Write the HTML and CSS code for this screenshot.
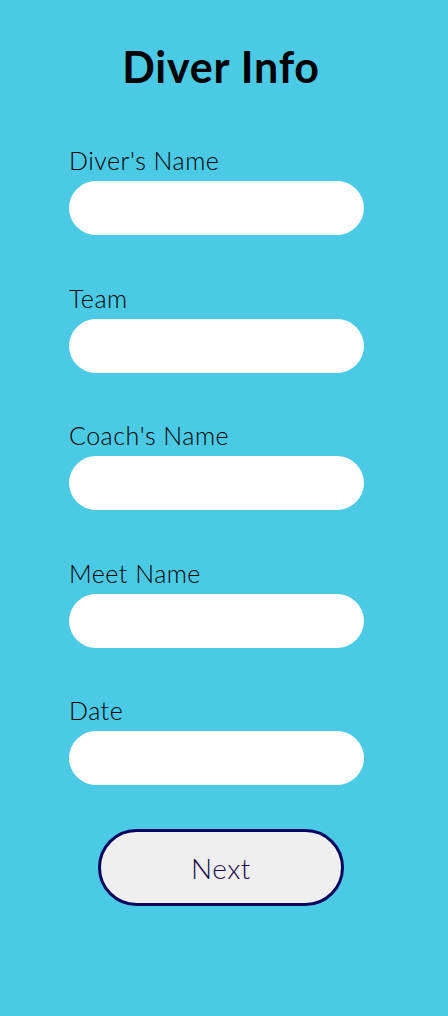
FILE: index.html
```html
<!DOCTYPE html>
<html lang="en">
<head>
<meta charset="utf-8">
<title>Diver Info</title>
<link rel="stylesheet" href="styles.css">
</head>
<body>
<main class="page">
  <h1 class="title">Diver Info</h1>
  <form class="form">
    <div class="field">
      <label class="label" for="diver">Diver's Name</label>
      <input class="input" id="diver" type="text">
    </div>
    <div class="field">
      <label class="label" for="team">Team</label>
      <input class="input" id="team" type="text">
    </div>
    <div class="field">
      <label class="label" for="coach">Coach's Name</label>
      <input class="input" id="coach" type="text">
    </div>
    <div class="field">
      <label class="label" for="meet">Meet Name</label>
      <input class="input" id="meet" type="text">
    </div>
    <div class="field field-last">
      <label class="label" for="date">Date</label>
      <input class="input" id="date" type="text">
    </div>
    <div class="actions">
      <button class="next" type="button">Next</button>
    </div>
  </form>
</main>
</body>
</html>
```
FILE: styles.css
```css
html, body {
  margin: 0;
  padding: 0;
  background: #4acae5;
}
body {
  font-family: "Lato", "Noto Sans", sans-serif;
  color: #000;
  min-height: 1016px;
}
.page {
  display: flex;
  flex-direction: column;
  align-items: stretch;
}
.title {
  margin: 0;
  padding: 42px 6px 0 0;
  font-size: 43px;
  line-height: 50px;
  font-weight: 700;
  letter-spacing: 0.8px;
  text-align: center;
}
.form {
  display: flex;
  flex-direction: column;
  padding: 56px 0 0 69px;
  width: 295px;
}
.field {
  display: flex;
  flex-direction: column;
  gap: 9px;
  margin-bottom: 50.5px;
}
.field-last {
  margin-bottom: 44px;
}
.label {
  font-size: 25px;
  line-height: 24px;
  font-weight: 300;
  letter-spacing: 0.5px;
}
.input {
  box-sizing: border-box;
  width: 295px;
  height: 54px;
  border: none;
  border-radius: 27px;
  background: #fff;
  padding: 0 20px;
  font: inherit;
  font-size: 20px;
  outline: none;
}
.actions {
  display: flex;
  justify-content: flex-start;
  padding-left: 29px;
}
.next {
  box-sizing: border-box;
  width: 246px;
  height: 77px;
  border: 3px solid #0a0660;
  border-radius: 39px;
  background: #efefef;
  color: #1a0a48;
  font-family: "Lato", "Noto Sans", sans-serif;
  font-size: 28px;
  font-weight: 300;
  letter-spacing: 0.5px;
  cursor: pointer;
}
```
